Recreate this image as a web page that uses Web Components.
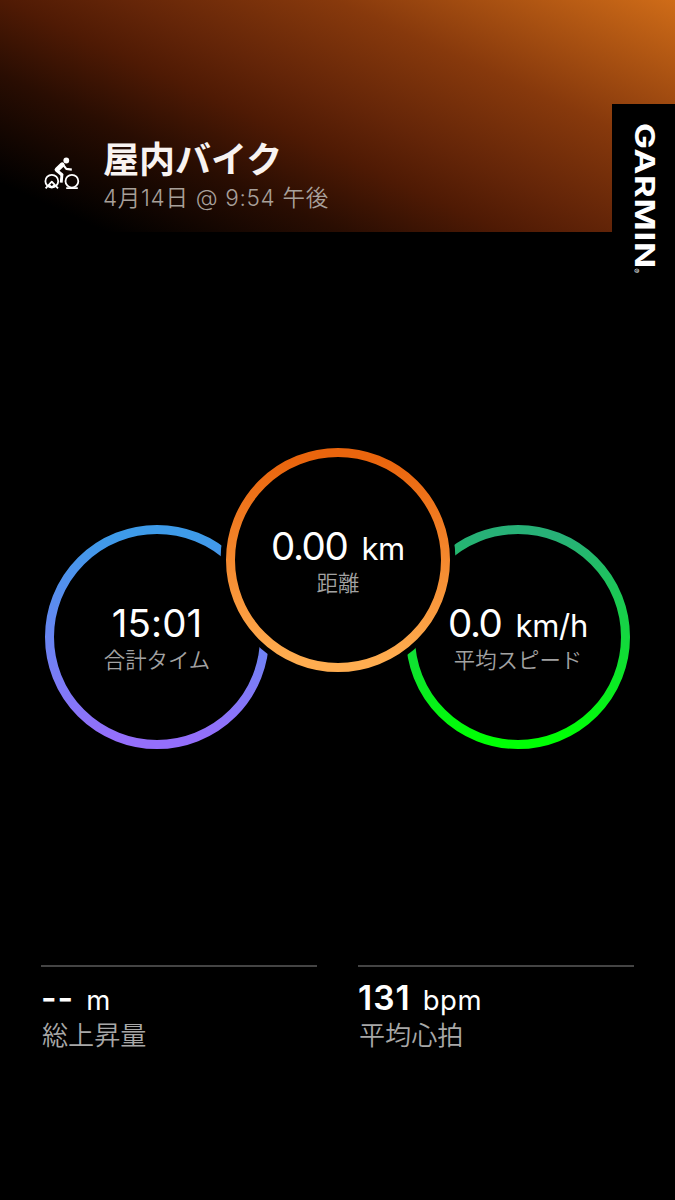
<!DOCTYPE html>
<html lang="ja">
<head>
<meta charset="utf-8">
<title>屋内バイク</title>
<style>
    body {
        margin: 0;
        background: #000;
        color: #fff;
        font-family: Inter, "Noto Sans CJK JP", sans-serif;
    }
</style>
</head>
<body>
<activity-card>
    <activity-header slot="header" activity="屋内バイク" date="4月14日 @ 9:54 午後">
        <bike-icon></bike-icon>
    </activity-header>
    <brand-tab slot="brand"></brand-tab>
    <stat-ring slot="rings" value="15:01" label="合計タイム" from="#3e9be9" to="#946ffb" cut="right"></stat-ring>
    <stat-ring slot="rings" value="0.00" unit="km" label="距離" from="#ea650d" to="#ffad50"></stat-ring>
    <stat-ring slot="rings" value="0.0" unit="km/h" label="平均スピード" from="#27b177" to="#00ff05" cut="left"></stat-ring>
    <stat-cell slot="stats" value="--" unit="m" label="総上昇量"></stat-cell>
    <stat-cell slot="stats" value="131" unit="bpm" label="平均心拍"></stat-cell>
</activity-card>

<script>
class ActivityCard extends HTMLElement {
    constructor() {
        super();
        this.attachShadow({ mode: 'open' });
        this.shadowRoot.innerHTML = `
            <style>
                :host {
                    display: block;
                    position: relative;
                    width: 675px;
                    height: 1200px;
                    overflow: hidden;
                    background: #000;
                }
                .brand {
                    position: absolute;
                    top: 104px;
                    right: 0;
                }
                .rings {
                    display: flex;
                    align-items: flex-end;
                    padding: 216px 0 0 45px;
                }
                .stats {
                    display: grid;
                    grid-template-columns: 276px 276px;
                    gap: 41px;
                    padding: 216px 41px 0;
                }
            </style>
            <slot name="header"></slot>
            <div class="brand"><slot name="brand"></slot></div>
            <div class="rings"><slot name="rings"></slot></div>
            <div class="stats"><slot name="stats"></slot></div>
        `;
    }
}

class ActivityHeader extends HTMLElement {
    constructor() {
        super();
        this.attachShadow({ mode: 'open' });
    }

    connectedCallback() {
        this.shadowRoot.innerHTML = `
            <style>
                :host {
                    display: flex;
                    box-sizing: border-box;
                    height: 232px;
                    padding: 138px 0 0 44px;
                    background: linear-gradient(24.7deg, #000 9%, #290d02 29%, #4f1a04 43%, #642508 53%, #87390c 71%, #cf6c18 100%);
                }
                .icon {
                    width: 36px;
                    padding-top: 18px;
                    margin-right: 23px;
                }
                h1 {
                    margin: 0;
                    font-size: 36px;
                    line-height: 44px;
                    font-weight: 700;
                    color: #f8f3f1;
                }
                p {
                    margin: 0;
                    font-size: 22.5px;
                    line-height: 31px;
                    font-weight: 350;
                    letter-spacing: 0.7px;
                    color: #a8a09b;
                }
            </style>
            <div class="icon"><slot></slot></div>
            <div>
                <h1>${this.getAttribute('activity')}</h1>
                <p>${this.getAttribute('date')}</p>
            </div>
        `;
    }
}

class BikeIcon extends HTMLElement {
    constructor() {
        super();
        this.attachShadow({ mode: 'open' });
        this.shadowRoot.innerHTML = `
            <style>
                :host, svg { display: block; }
            </style>
            <svg width="36" height="36" viewBox="0 0 36 36" fill="none" stroke="#fff" stroke-width="1.8" stroke-linejoin="round">
                <circle cx="22.3" cy="4.5" r="2.9" fill="#fff" stroke="none"/>
                <circle cx="7.8" cy="25.2" r="6.4"/>
                <circle cx="27.9" cy="25.2" r="6.4"/>
                <path d="M1.6 32.4 7.8 25.7 14 32.4M22.2 32.2h11.6M3.4 30.3l2.2-.7 2.2 1.6 2.2-1.6 2.2.7"/>
                <path d="M18.2 8.7 13 13.7" stroke-width="4.8" stroke-linecap="round"/>
                <path d="M13 14.6 18.2 19" stroke-width="3.2"/>
                <path d="M18 17.8 17.2 26.6" stroke-width="2.9"/>
                <path d="M19 8.6 22.3 12.9 27.8 13.6" stroke-width="2.1"/>
            </svg>
        `;
    }
}

class BrandTab extends HTMLElement {
    constructor() {
        super();
        this.attachShadow({ mode: 'open' });
        this.shadowRoot.innerHTML = `
            <style>
                :host, svg { display: block; }
                :host {
                    width: 63px;
                    height: 176px;
                    background: #000;
                }
            </style>
            <svg width="63" height="176" viewBox="0 0 63 176" fill="#fff">
                <g transform="translate(22.8 19) rotate(90)" font-family="Inter, sans-serif">
                    <text font-size="27.6" font-weight="650" letter-spacing="0.6" textLength="146" lengthAdjust="spacingAndGlyphs">GARMIN</text>
                    <text x="145.5" y="1.4" font-size="7">®</text>
                </g>
            </svg>
        `;
    }
}

class StatRing extends HTMLElement {
    constructor() {
        super();
        this.attachShadow({ mode: 'open' });
    }

    connectedCallback() {
        const unit = this.getAttribute('unit');
        const cut = this.getAttribute('cut');
        // centre of the neighbouring ring that bites into this one
        const cutX = cut === 'right' ? 293 : -68;

        this.shadowRoot.innerHTML = `
            <style>
                :host {
                    display: grid;
                    width: 224px;
                    height: 224px;
                    flex: none;
                    margin-left: ${cut === 'left' ? '-44px' : cut === 'right' ? '0' : '-43px'};
                    margin-bottom: ${cut ? '0' : '77px'};
                }
                svg, .text { grid-area: 1 / 1; }
                .text {
                    padding-top: 74px;
                    text-align: center;
                    white-space: nowrap;
                }
                .value {
                    height: 48px;
                    line-height: 49px;
                    font-size: 38.5px;
                    font-weight: 400;
                    letter-spacing: ${unit ? '-1.4px' : '0.1px'};
                    color: #fff;
                }
                .unit {
                    margin-left: 14px;
                    font-size: 31px;
                    letter-spacing: -0.3px;
                }
                .label {
                    line-height: 26px;
                    font-size: 21.4px;
                    font-weight: 350;
                    color: #a2a2a2;
                }
            </style>
            <svg width="224" height="224" viewBox="0 0 224 224">
                <defs>
                    <linearGradient id="tint" gradientUnits="userSpaceOnUse" x1="0" y1="0" x2="0" y2="224">
                        <stop offset="0.05" stop-color="${this.getAttribute('from')}"/>
                        <stop offset="0.95" stop-color="${this.getAttribute('to')}"/>
                    </linearGradient>
                    <mask id="bite">
                        <rect width="224" height="224" fill="#fff"/>
                        ${cut ? `<circle cx="${cutX}" cy="35" r="117.5" fill="#000"/>` : ''}
                    </mask>
                </defs>
                <circle cx="112" cy="112" r="107.5" fill="none" stroke="url(#tint)" stroke-width="9" mask="url(#bite)"/>
            </svg>
            <div class="text">
                <div class="value">${this.getAttribute('value')}${unit ? `<span class="unit">${unit}</span>` : ''}</div>
                <div class="label">${this.getAttribute('label')}</div>
            </div>
        `;
    }
}

class StatCell extends HTMLElement {
    constructor() {
        super();
        this.attachShadow({ mode: 'open' });
    }

    connectedCallback() {
        this.shadowRoot.innerHTML = `
            <style>
                :host {
                    display: block;
                    border-top: 2px solid #444;
                    padding-top: 11px;
                }
                .value {
                    height: 41px;
                    line-height: 40px;
                    font-size: 33.5px;
                    font-weight: 600;
                    letter-spacing: 1px;
                    color: #fff;
                }
                .unit {
                    margin-left: 12px;
                    font-size: 27.5px;
                    font-weight: 400;
                    letter-spacing: 0.6px;
                }
                .label {
                    padding-left: 1px;
                    line-height: 34px;
                    font-size: 26.1px;
                    font-weight: 350;
                    color: #a8a8a8;
                }
            </style>
            <div class="value">${this.getAttribute('value')}<span class="unit">${this.getAttribute('unit')}</span></div>
            <div class="label">${this.getAttribute('label')}</div>
        `;
    }
}

customElements.define('activity-card', ActivityCard);
customElements.define('activity-header', ActivityHeader);
customElements.define('bike-icon', BikeIcon);
customElements.define('brand-tab', BrandTab);
customElements.define('stat-ring', StatRing);
customElements.define('stat-cell', StatCell);
</script>
</body>
</html>
